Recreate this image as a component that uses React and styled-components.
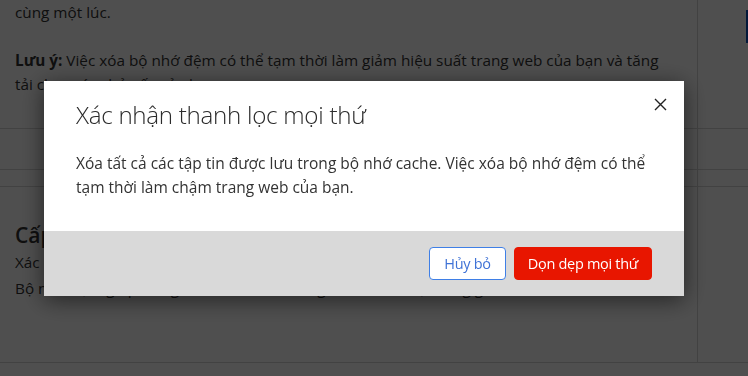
import React from "react";
import styled, { createGlobalStyle } from "styled-components";

const Global = createGlobalStyle`
  html, body { margin: 0; padding: 0; background: #fff; overflow: hidden; }
  body { font-family: "Open Sans", "Noto Sans", sans-serif; color: #333; }
  * { box-sizing: border-box; }
`;

const Page = styled.div`
  width: 748px;
  height: 376px;
  display: flex;
  flex-direction: column;
  font-size: 15.3px;
`;

const Row = styled.div`
  display: grid;
  grid-template-columns: 698px 1fr;
  height: ${(p) => p.$h}px;
  border-bottom: 1px solid #d6d6d6;
`;

const Main = styled.div`
  padding: ${(p) => p.$pad || "0 38px 0 15px"};
  border-right: 1px solid #d6d6d6;
`;

const Side = styled.div`
  display: flex;
  justify-content: flex-end;
  align-items: flex-start;
  padding-top: 10px;
`;

const SideBar = styled.div`
  width: 2px;
  height: 33px;
  background: #0a4fb8;
`;

const Para = styled.p`
  margin: ${(p) => p.$mt || 0}px 0 0;
  line-height: ${(p) => p.$lh || 24}px;
`;

const Heading = styled.h3`
  margin: 0;
  font-size: 21px;
  font-weight: 600;
  line-height: 28px;
`;

const Overlay = styled.div`
  position: fixed;
  inset: 0;
  background: rgba(0, 0, 0, 0.69);
  display: flex;
  align-items: center;
  padding-left: 44px;
`;

const Modal = styled.div`
  width: 640px;
  height: 215px;
  background: #fff;
  box-shadow: 0 4px 22px rgba(0, 0, 0, 0.55);
  display: flex;
  flex-direction: column;
  position: relative;
`;

const Body = styled.div`
  flex: 1;
  padding: 18px 32px 0 32px;
`;

const Title = styled.h2`
  margin: 0;
  font-size: 24.2px;
  font-weight: 300;
  line-height: 32px;
  color: #2b2b2b;
  letter-spacing: -0.3px;
`;

const Text = styled.p`
  margin: 20px 0 0;
  font-size: 15.5px;
  line-height: 24px;
  color: #333;
`;

const Close = styled.button`
  position: absolute;
  top: 17px;
  right: 17px;
  width: 14px;
  height: 14px;
  padding: 0;
  border: 0;
  background: transparent;
  display: flex;
  align-items: center;
  justify-content: center;
  cursor: pointer;
`;

const Footer = styled.div`
  height: 65px;
  background: #d9d9d9;
  display: flex;
  justify-content: flex-end;
  align-items: center;
  gap: 8px;
  padding-right: 32px;
`;

const Button = styled.button`
  width: ${(p) => p.$w}px;
  height: 33px;
  padding: 0;
  border-radius: 4px;
  font-family: "Open Sans", "Noto Sans", sans-serif;
  font-size: 14.5px;
  letter-spacing: -0.3px;
  cursor: pointer;
  border: 1px solid ${(p) => (p.$danger ? "#e81600" : "#3f7fe6")};
  background: ${(p) => (p.$danger ? "#e81600" : "#fff")};
  color: ${(p) => (p.$danger ? "#fff" : "#3f72d6")};
`;

export default function App() {
  return (
    <>
      <Global />
      <Page>
        <Row $h={129}>
          <Main>
            <Para>cùng một lúc.</Para>
            <Para $mt={24}>
              <b>Lưu ý:</b> Việc xóa bộ nhớ đệm có thể tạm thời làm giảm hiệu suất trang web của bạn và tăng
              tải cho máy chủ gốc của bạn.
            </Para>
          </Main>
          <Side>
            <SideBar />
          </Side>
        </Row>
        <Row $h={41}>
          <Main />
          <Side />
        </Row>
        <Row $h={17}>
          <Main />
          <Side />
        </Row>
        <Row $h={176}>
          <Main $pad="34px 15px 0">
            <Heading>Cấp độ bộ nhớ đệm</Heading>
            <Para $lh={26}>Xác định lượng nội dung tĩnh của trang web mà bạn muốn lưu vào bộ nhớ đệm.</Para>
            <Para $lh={26}>Bộ nhớ đệm giúp trang tải nhanh hơn trong khi lưu trữ nội dung gốc.</Para>
          </Main>
          <Side />
        </Row>
      </Page>
      <Overlay>
        <Modal role="dialog">
          <Body>
            <Title>Xác nhận thanh lọc mọi thứ</Title>
            <Text>
              Xóa tất cả các tập tin được lưu trong bộ nhớ cache. Việc xóa bộ nhớ đệm có thể tạm thời làm chậm
              trang web của bạn.
            </Text>
          </Body>
          <Close aria-label="Đóng">
            <svg width="13" height="13" viewBox="0 0 13 13">
              <path d="M1 1 L12 12 M12 1 L1 12" stroke="#222" strokeWidth="1.4" fill="none" />
            </svg>
          </Close>
          <Footer>
            <Button $w={77}>Hủy bỏ</Button>
            <Button $w={138} $danger>
              Dọn dẹp mọi thứ
            </Button>
          </Footer>
        </Modal>
      </Overlay>
    </>
  );
}
